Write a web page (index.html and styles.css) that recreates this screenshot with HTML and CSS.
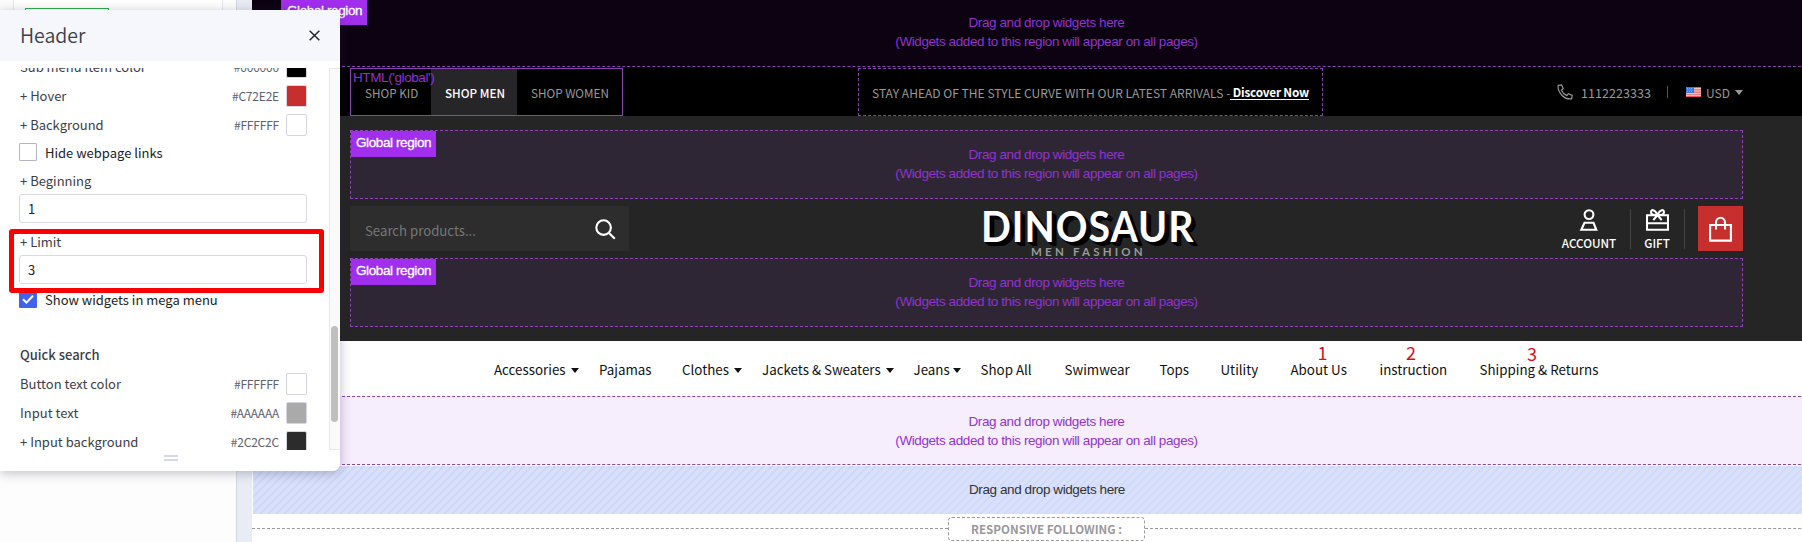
FILE: index.html
```html
<!DOCTYPE html>
<html lang="en">
<head>
<meta charset="utf-8">
<title>Header settings</title>
<link rel="stylesheet" href="styles.css">
</head>
<body>
<div class="editor">
  <aside class="rail"><div class="rail-card"><div class="rail-button"></div></div></aside>
  <div class="gutter"></div>
  <main class="stage">
    <div class="page">
      <section class="region region-top">
        <span class="tag">Global region</span>
        <p class="hint">Drag and drop widgets here<br>(Widgets added to this region will appear on all pages)</p>
      </section>
      <div class="topbar">
        <div class="shops"><span class="html-tag">HTML('global')</span><span class="shop kid">SHOP KID</span><span class="shop men">SHOP MEN</span><span class="shop women">SHOP WOMEN</span></div>
        <div class="promo"><span class="promo-text">STAY AHEAD OF THE STYLE CURVE WITH OUR LATEST ARRIVALS -</span><a class="discover">&nbsp;Discover Now</a></div>
        <div class="contact">
          <svg class="phone" viewBox="0 0 16 16"><path d="M1.2 1.3 L4.6 .8 L6.2 4.6 L4.4 6.2 C5.4 8.4 7.4 10.6 9.8 11.6 L11.4 9.8 L15.2 11.4 L14.6 14.8 C7.6 16 .2 8.6 1.2 1.3Z"/></svg>
          <span class="number">1112223333</span>
          <i class="bar"></i>
          <svg class="flag" viewBox="0 0 15 10"><path fill="#f4eeee" d="M0 0h15v10H0z"/><path stroke="#e8555a" stroke-width="1.1" d="M0 .6h15M0 2.9h15M0 5.1h15M0 7.3h15M0 9.4h15"/><path fill="#3b78dc" d="M0 0h8v6H0z"/><path stroke="#a9c8f5" stroke-width=".7" stroke-dasharray="1 1" d="M1 1.5h6M1.5 3h6M1 4.5h6"/></svg>
          <span class="usd">USD</span>
          <i class="caret"></i>
        </div>
      </div>
      <header class="shop-header">
        <section class="region boxed">
          <span class="tag">Global region</span>
          <p class="hint">Drag and drop widgets here<br>(Widgets added to this region will appear on all pages)</p>
        </section>
        <div class="brand-row">
          <div class="search"><span>Search products...</span>
            <svg viewBox="0 0 21 21"><circle cx="8.6" cy="8.6" r="7.3"/><path d="M14 14l5.8 5.8"/></svg>
          </div>
          <div class="logo"><b>DINOSAUR</b><small>MEN FASHION</small></div>
          <div class="actions">
            <div class="action account"><svg viewBox="0 0 20 22"><circle cx="10" cy="5.6" r="4.4"/><path d="M5.500 13.800h9l2.800 7H2.300z"/></svg><span>ACCOUNT</span></div>
            <i class="rule"></i>
            <div class="action gift"><svg viewBox="0 0 23 22"><path d="M1 6.200h21v14.600H1zM1 14.200h21M11.500 6.200C9 0 5 .2 5 3.200c0 2.600 3.600 3 6.500 3C14.400 6.200 18 5.800 18 3.200c0-3-4-3.200-6.500 3M11.500 6l-4.200 5.200M11.500 6l4.200 5.200"/></svg><span>GIFT</span></div>
            <i class="rule"></i>
            <div class="cart"><svg viewBox="0 0 23 26"><path d="M1.100 9h20.800v15.600H1.100zM7 13.500V6.500a4.500 4.800 0 0 1 9 0v7"/></svg></div>
          </div>
        </div>
        <section class="region boxed">
          <span class="tag">Global region</span>
          <p class="hint">Drag and drop widgets here<br>(Widgets added to this region will appear on all pages)</p>
        </section>
      </header>
      <nav class="menu">
        <a class="drop w1">Accessories</a><a class="w2">Pajamas</a><a class="drop w3">Clothes</a><a class="drop w4">Jackets &amp; Sweaters</a><a class="drop w5">Jeans</a><a class="w6">Shop All</a><a class="w7">Swimwear</a><a class="w8">Tops</a><a class="w9">Utility</a><a class="w10">About Us<em class="first">1</em></a><a class="w11">instruction<em>2</em></a><a class="w12">Shipping &amp; Returns<em class="third">3</em></a>
      </nav>
      <section class="region region-light">
        <p class="hint">Drag and drop widgets here<br>(Widgets added to this region will appear on all pages)</p>
      </section>
      <section class="dropzone"><p class="hint">Drag and drop widgets here</p></section>
      <div class="following"><span>RESPONSIVE FOLLOWING :</span></div>
    </div>
  </main>
</div>

<div class="panel">
  <div class="panel-head"><h1>Header</h1><svg viewBox="0 0 10 10"><path d="M.6.6l8.800 8.800M9.400.6L.6 9.400"/></svg></div>
  <div class="panel-body">
    <div class="fields">
      <div class="row"><span class="name">Sub menu item color</span><code>#000000</code><i class="swatch black"></i></div>
      <div class="row"><span class="name">+ Hover</span><code>#C72E2E</code><i class="swatch red"></i></div>
      <div class="row"><span class="name">+ Background</span><code>#FFFFFF</code><i class="swatch"></i></div>
      <div class="check"><i class="box"></i><span>Hide webpage links</span></div>
      <label class="caption">+ Beginning</label>
      <div class="input">1</div>
      <label class="caption second">+ Limit</label>
      <div class="input">3</div>
      <div class="check shown"><i class="box on"><svg viewBox="0 0 18 18"><path d="M4 9.200l3.400 3.400L14 5.800"/></svg></i><span>Show widgets in mega menu</span></div>
      <h2>Quick search</h2>
      <div class="row"><span class="name">Button text color</span><code>#FFFFFF</code><i class="swatch"></i></div>
      <div class="row"><span class="name">Input text</span><code>#AAAAAA</code><i class="swatch grey"></i></div>
      <div class="row"><span class="name">+ Input background</span><code>#2C2C2C</code><i class="swatch dark"></i></div>
    </div>
    <div class="scroll"><i></i></div>
  </div>
  <div class="grip"></div>
  <div class="highlight"></div>
</div>
</body>
</html>
```
FILE: styles.css
```css
* { box-sizing: border-box; }
body { margin: 0; width: 1802px; height: 542px; overflow: hidden; background: #fff; font-family: "Noto Sans CJK SC", "Noto Sans", sans-serif; }
p, h1, h2 { margin: 0; }
i, em { font-style: normal; }
svg { display: block; fill: none; }

.editor { display: flex; height: 542px; }
.rail { width: 236px; padding: 0 13px; background: #fdfdfe; }
.rail-card { height: 10px; padding: 8px 11px 0; background: #fff; border: solid #e8e9ee; border-width: 0 1px; }
.rail-button { width: 84px; height: 2px; border: 1px solid #2fae48; border-bottom: 0; }
.gutter { width: 16px; background: #e9ecf5; border-left: 1px solid #d3d7e4; }
.stage { width: 1550px; overflow: hidden; }
.page { width: 1589px; }

/* widget regions */
.region { position: relative; display: flex; justify-content: center; font-family: "Liberation Sans", Arial, sans-serif; }
.hint { font: 13.500px/19px "Liberation Sans", Arial, sans-serif; letter-spacing: -.41px; text-align: center; color: #9133cf; white-space: nowrap; }
.tag { position: absolute; left: 0; top: 0; width: 85px; height: 26px; padding-left: 5px; background: #a22eee; color: #fff; font: 13.500px/24px "Liberation Sans", Arial, sans-serif; letter-spacing: -.4px; white-space: nowrap; -webkit-text-stroke: .3px #fff; }
.region-top { height: 67px; padding-top: 13px; background: #0c0211; border-bottom: 1px dashed #8743ae; }
.region-top .tag { left: 29px; top: -1px; width: 86px; padding-left: 6px; }
.boxed { width: 1393px; height: 69px; padding-top: 14px; background: #2f2635; border: 1px dashed #8f43b9; }
.region-light { height: 69px; padding-top: 15px; background: #f6edfd; border: dashed #8743ae; border-width: 1px 0; }

.topbar { display: flex; height: 49px; padding: 1px 98px 0; background: #000; font-size: 12px; color: #999; }
.shops { position: relative; display: flex; width: 273px; height: 48px; border: 1px solid #8b43b4; font-size: 11.700px; }
.html-tag { position: absolute; left: 2px; top: -1px; font: 13.500px/19px "Liberation Sans", Arial, sans-serif; letter-spacing: -.4px; color: #9430d4; }
.shop { line-height: 47px; white-space: nowrap; }
.kid { width: 80px; padding-left: 14px; }
.men { width: 86px; padding-left: 14px; background: #262527; color: #fff; font-weight: 500; }
.women { padding-left: 14px; }
.promo { display: flex; align-items: center; width: 465px; height: 48px; margin-left: 235px; padding-left: 13px; border: 1px dashed #8743ae; white-space: nowrap; }
.promo-text { font-size: 12.050px; }
.discover { color: #fff; font-size: 11.800px; font-weight: 700; letter-spacing: -.2px; line-height: 15px; border-bottom: 1px solid #fff; }
.contact { display: flex; align-items: center; width: 186px; margin-left: auto; }
.phone { width: 16px; height: 16px; stroke: #999; stroke-width: 1.200; }
.number { margin-left: 8px; font-size: 12.600px; }
.bar { width: 1px; height: 12px; margin-left: auto; background: #555; }
.flag { width: 15px; height: 10px; margin-left: 18px; }
.usd { margin-left: 5px; font-size: 12px; }
.caret { border: 4.500px solid transparent; border-top: 5px solid #999; border-bottom: 0; margin-left: 5px; }

.shop-header { height: 225px; padding: 14px 98px 0; background: #252525; }
.brand-row { display: flex; height: 59px; padding-top: 7px; }
.search { display: flex; justify-content: space-between; width: 279px; height: 45px; padding: 13px 13px 0 15px; background: #2d2d2d; color: #777; font-size: 13.200px; line-height: 23px; }
.search svg { width: 21px; height: 21px; stroke: #fff; stroke-width: 2.100; }
.logo { width: 216px; margin-left: 352px; padding-top: 1px; font-family: Lato, sans-serif; white-space: nowrap; }
.logo b { display: block; font-size: 42px; line-height: 38px; letter-spacing: 1px; color: #fff; text-shadow: 1px 1px #000, 2px 2px #000, 3px 3px #000, 4px 3px #000, 5px 4px #000; transform: scaleX(.937); transform-origin: 0 0; }
.logo small { display: block; margin-left: 50px; font-size: 11.500px; font-weight: 700; line-height: 13px; letter-spacing: 3.200px; color: #999; }
.actions { display: flex; width: 181px; margin-left: auto; }
.action { display: flex; flex-direction: column; align-items: center; padding-top: 3px; color: #fff; font-size: 11.700px; font-weight: 500; line-height: 18px; }
.action svg { height: 22px; stroke: #fff; stroke-width: 2.100; }
.action span { margin-top: 3px; }
.account { width: 54px; }
.gift { width: 26px; }
.rule { width: 1px; height: 40px; margin: 3px 13px 0 14px; background: #444; }
.cart { display: grid; place-items: center; width: 45px; height: 45px; margin-left: auto; background: #c72e2e; }
.cart svg { width: 23px; height: 26px; stroke: #fff; stroke-width: 2.100; }

.menu { display: flex; height: 55px; padding: 17px 0 0 242px; color: #111; font-size: 13.350px; line-height: 24px; white-space: nowrap; }
.menu a { position: relative; flex: none; margin-right: 33px; }
.w1 { width: 72px; } .w2 { width: 50px; } .w3 { width: 47px; } .w4 { width: 118.500px; } .w5 { width: 34px; } .w6 { width: 51px; }
.w7 { width: 62px; } .w8 { width: 28px; } .w9 { width: 37px; } .w10 { width: 56px; } .w11 { width: 67px; } .w12 { width: 119px; }
.drop::after { content: ""; position: absolute; right: -13px; top: 10px; border: 4px solid transparent; border-top: 5px solid #111; border-bottom: 0; }
.menu em { position: absolute; left: 0; right: 4px; top: -16px; text-align: center; font-size: 18px; line-height: 20px; color: #d80e18; }
.menu .first { right: -8px; }
.menu .third { top: -15px; right: 14px; }

.dropzone { height: 48px; margin: 1px 0 0 1px; padding-top: 14px; background: repeating-linear-gradient(135deg, #d9e0fc 0 4px, #cfd8f6 4px 5.660px); }
.dropzone .hint { color: #333; }
.following { display: flex; align-items: center; height: 25px; margin-top: 2px; color: #999; font-size: 11.600px; font-weight: 700; }
.following::before, .following::after { content: ""; flex: 1; border-top: 1px dashed #999; }
.following span { width: 197px; height: 24px; border: 1px dashed #999; border-radius: 4px; line-height: 22px; text-align: center; white-space: nowrap; }

/* floating settings panel */
.panel { position: absolute; left: 0; top: 10px; width: 340px; height: 461px; background: #fff; border-radius: 0 0 7px 0; box-shadow: 0 2px 12px rgba(40, 40, 70, .3); color: #3c3d49; font-size: 13px; }
.panel-head { display: flex; align-items: center; justify-content: space-between; height: 51px; padding: 0 20px; background: #f5f7fc; }
.panel-head h1 { font-size: 19.500px; font-weight: 350; line-height: 30px; margin-top: -2px; }
.panel-head svg { width: 11px; height: 11px; stroke: #222; stroke-width: 1.300; }
.panel-body { display: flex; justify-content: space-between; height: 382px; margin-top: 7px; padding-left: 19px; overflow: hidden; }
.fields { width: 288px; margin-top: -16px; white-space: nowrap; }
.row { display: flex; align-items: center; height: 29px; }
.name { flex: 1; padding-left: 1px; }
.row code { margin-right: 7px; font-family: inherit; font-size: 12px; letter-spacing: -.2px; color: #60616f; }
.swatch { width: 21px; height: 22px; border: 1px solid #d5d5e2; border-radius: 2px; }
.black { background: #000; } .red { background: #c72e2e; } .swatch.grey { background: #aaa; } .dark { background: #2c2c2c; }
.check { display: flex; align-items: center; gap: 8px; height: 26px; color: #222; }
.box { width: 18px; height: 18px; border: 1px solid #b4b4c4; border-radius: 1px; }
.on { background: #4263eb; border: 0; }
.on svg { stroke: #fff; stroke-width: 2; }
.caption { display: block; height: 29px; padding: 6px 0 0 1px; line-height: 20px; }
.second { height: 28px; margin-top: 4px; padding-top: 5px; }
.input { height: 29px; padding-left: 8px; border: 1px solid #d8d8e4; border-radius: 3px; color: #222; line-height: 27px; }
.shown { margin-top: 2px; }
h2 { height: 28px; margin-top: 29px; padding-left: 1px; font-size: 13px; font-weight: 500; line-height: 28px; }
.scroll { width: 11px; padding: 257px 2px 0 1px; background: #fafafa; border: 1px solid #e7e7e7; border-right: 0; }
.scroll i { display: block; width: 7px; height: 96px; border-radius: 4px; background: #bfbfbf; }
.grip { width: 14px; height: 6px; margin: 5px 0 0 164px; border: solid #d5d9e6; border-width: 2px 0; }
.highlight { position: absolute; left: 9px; top: 219px; width: 315px; height: 64px; border: 5px solid #fa0000; border-radius: 3px; }
```
